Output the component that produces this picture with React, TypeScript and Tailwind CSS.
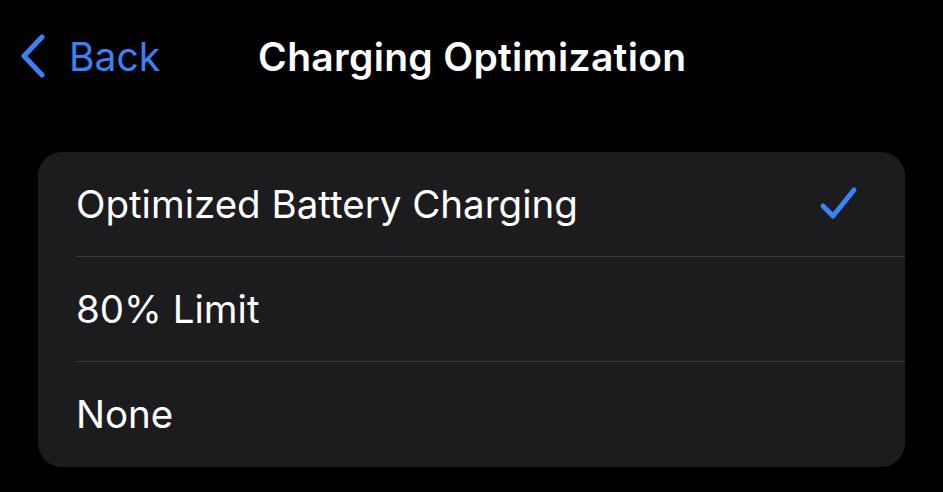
export default function App() {
  const options = ["Optimized Battery Charging", "80% Limit", "None"]
  const selected = 0

  return (
    <div className="w-[943px] h-[492px] bg-black overflow-hidden font-['Inter',sans-serif] text-white">
      <div className="flex items-center h-[112px] pl-[20px]">
        <div className="flex items-center text-[#3a82f7]">
          <svg width="26" height="44" viewBox="0 0 26 44" fill="none">
            <path d="M22 3 L4 22 L22 41" stroke="currentColor" strokeWidth="5" strokeLinecap="round" strokeLinejoin="round" />
          </svg>
          <span className="ml-[23px] text-[39px] leading-none">Back</span>
        </div>
        <h1 className="ml-[98px] text-[39px] font-semibold leading-none tracking-[0.3px]">Charging Optimization</h1>
      </div>

      <div className="mt-[40px] mx-[38px] bg-[#1c1c1e] rounded-[24px] overflow-hidden">
        {options.map((label, i) => (
          <div key={label} className="pl-[38px]">
            <div
              className={
                "flex items-center justify-between h-[105px] pr-[46px] " +
                (i < options.length - 1 ? "border-b border-[#3a3a3c]" : "")
              }
            >
              <span className="text-[38.5px] leading-none">{label}</span>
              {i === selected && (
                <svg width="40" height="36" viewBox="0 0 40 36" fill="none" className="text-[#3a82f7]">
                  <path d="M4 20 L14 30 L35 4" stroke="currentColor" strokeWidth="5" strokeLinecap="round" strokeLinejoin="round" />
                </svg>
              )}
            </div>
          </div>
        ))}
      </div>
    </div>
  )
}
